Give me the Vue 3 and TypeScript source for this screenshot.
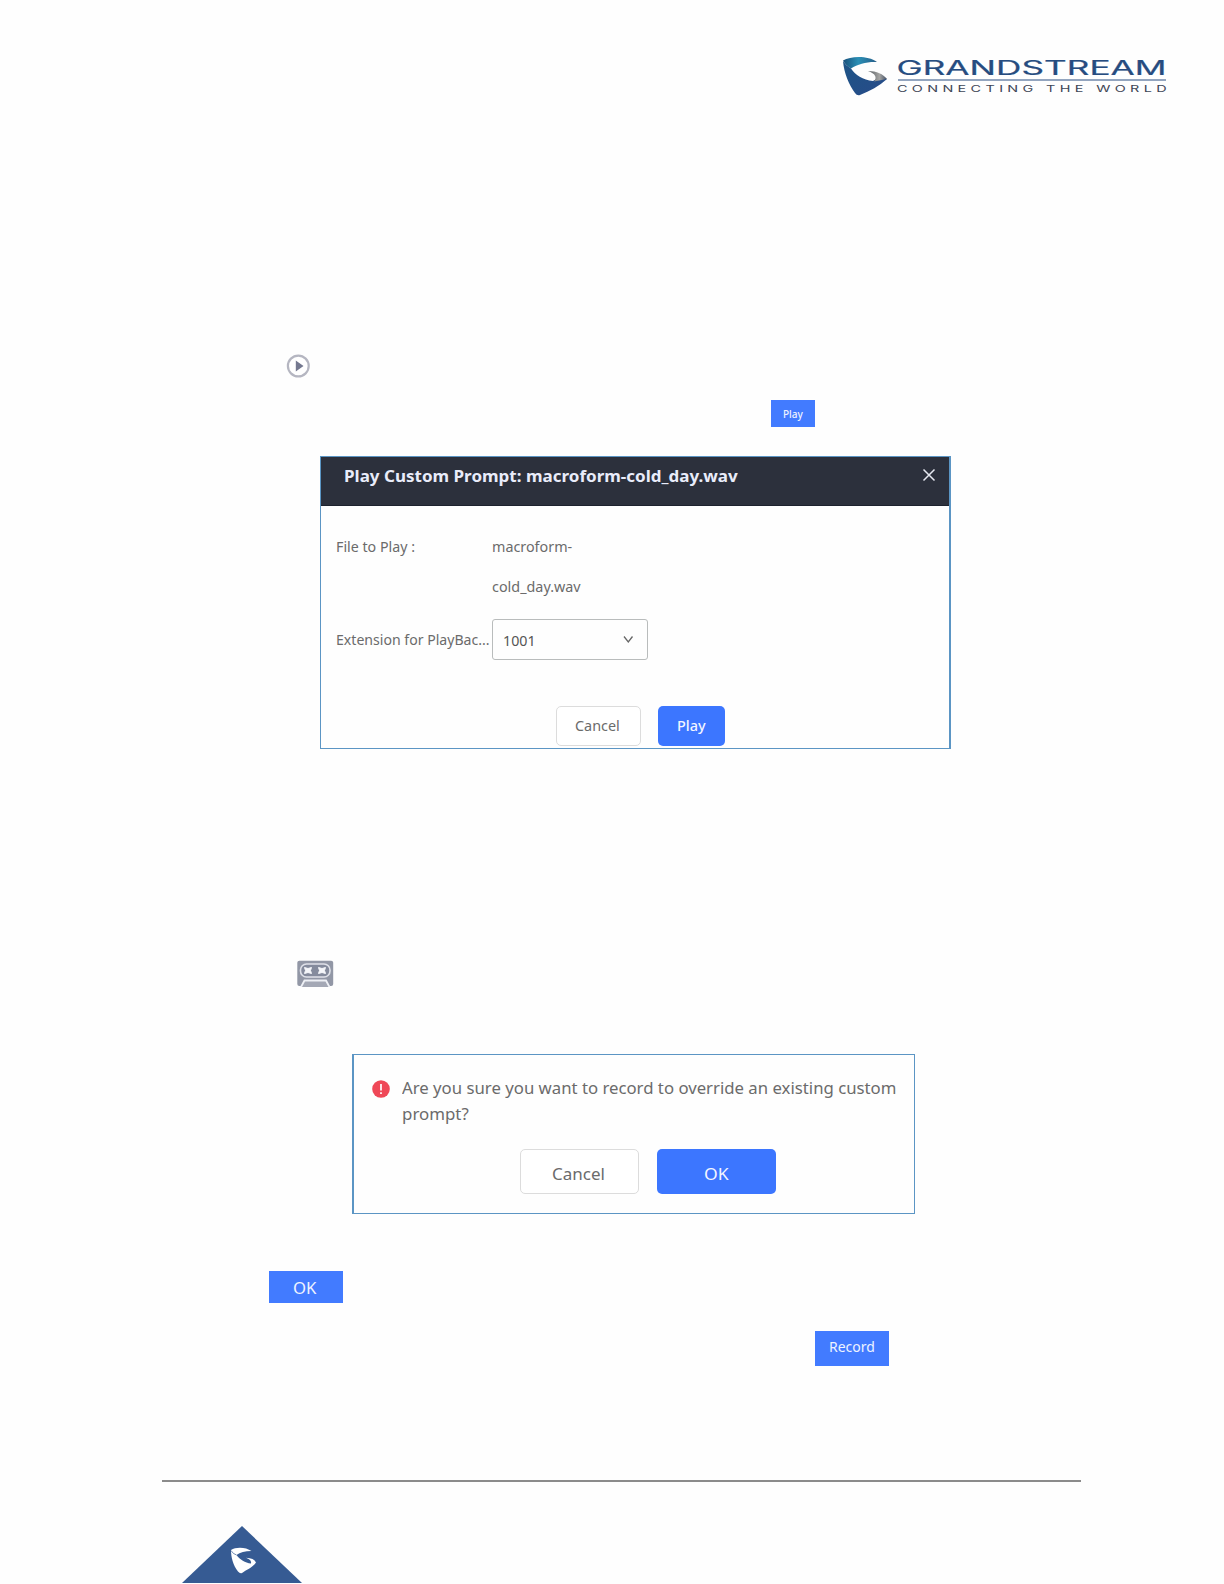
<script setup lang="ts">
import type { Directive } from 'vue'

// Condenses or widens a label horizontally to the given width in pixels.
const vFit: Directive<HTMLElement, number> = {
  mounted(el, binding) {
    el.style.transform = `scaleX(${binding.value / el.offsetWidth})`
  },
}
</script>

<template>
  <main class="page">
    <header class="brand">
      <svg width="330" height="46" viewBox="0 0 330 46">
        <defs>
          <linearGradient id="top" x1="0" y1="0" x2="1" y2="0">
            <stop offset="0" stop-color="#174e79" />
            <stop offset=".45" stop-color="#2b8fb5" />
            <stop offset="1" stop-color="#265d88" />
          </linearGradient>
          <linearGradient id="body" x1="0" y1="0" x2="1" y2="1">
            <stop offset="0" stop-color="#1d5486" />
            <stop offset="1" stop-color="#284b89" />
          </linearGradient>
          <linearGradient id="tip" x1="0" y1="0" x2="1" y2="0">
            <stop offset="0" stop-color="#555b60" />
            <stop offset=".6" stop-color="#a5a5a3" />
            <stop offset="1" stop-color="#445064" />
          </linearGradient>
        </defs>
        <path d="M0 4.500C8 0 25 -.5 34 6C24 5.500 15 8 8 12.500Q3 10 0 4.500Z" fill="url(#top)" />
        <path d="M0 5Q3 10 8 12.500C12 19 20 24 30 25L37 21L44 23C36 30 27 35 17 39Q14 40 12 37C6 29 1 17 0 5Z" fill="url(#body)" />
        <path d="M25 15C34 15 40 18 44 23L31 25.500Q36 19 25 15Z" fill="url(#tip)" />
        <g transform="translate(53.500 19) scale(1.8 1)">
          <text class="name" x="0" y="0" textLength="150" lengthAdjust="spacing">GRANDSTREAM</text>
        </g>
        <rect x="55" y="23.500" width="268" height="1" fill="#294c80" />
        <g transform="translate(54 36.200) scale(1.6 1)">
          <text class="tag" x="0" y="0" textLength="168.500" lengthAdjust="spacing">CONNECTING THE WORLD</text>
        </g>
      </svg>
    </header>

    <svg class="play-icon" width="26" height="26" viewBox="0 0 26 26">
      <circle cx="13.300" cy="13" r="10.400" fill="#fff" stroke="#b5b6c1" stroke-width="2.200" />
      <path d="M10.800 7.500L18.500 13L10.800 18.500Z" fill="#74788f" />
    </svg>

    <div class="chip chip-play"><span v-fit="19.5">Play</span></div>

    <section class="dialog play-dialog">
      <div class="title-bar">
        <strong v-fit="393.5">Play Custom Prompt: macroform-cold_day.wav</strong>
        <svg width="14" height="14" viewBox="0 0 14 14"><path d="M1.500 1.500L12.500 12.500M12.500 1.500L1.500 12.500" /></svg>
      </div>
      <div class="form-row">
        <div class="label"><span v-fit="78.5">File to Play :</span></div>
        <div class="value"><span v-fit="80">macroform-</span><br /><span v-fit="89">cold_day.wav</span></div>
      </div>
      <div class="form-row select-row">
        <div class="label"><span v-fit="153.5">Extension for PlayBac...</span></div>
        <div class="select">
          <span v-fit="33">1001</span>
          <svg width="11" height="9" viewBox="0 0 11 9"><path d="M1 1.500L5.300 7L9.500 1.500" /></svg>
        </div>
      </div>
      <div class="actions">
        <button class="cancel"><span v-fit="45">Cancel</span></button>
        <button class="primary"><span v-fit="28.5">Play</span></button>
      </div>
    </section>

    <svg class="cassette" width="37" height="27" viewBox="0 0 37 27">
      <rect x=".3" y=".7" width="35.900" height="25.300" rx="2" fill="#9297a6" />
      <rect x="3.500" y="4" width="29.500" height="13" rx="6" fill="#858b9d" stroke="#dfe1e9" stroke-width="1.600" />
      <path d="M7.500 7.500L11 8.500L14.500 7.500L13.500 10.500L14.500 13.500L11 12.500L7.500 13.500L8.500 10.500Z M21.500 7.500L25 8.500L28.500 7.500L27.500 10.500L28.500 13.500L25 12.500L21.500 13.500L22.500 10.500Z" fill="#f5f6fa" stroke="#f5f6fa" />
      <path d="M4 27L7.500 20.500H29L32.500 27" fill="#a4a8b5" stroke="#eef0f5" stroke-width="1.800" />
    </svg>

    <section class="dialog confirm-dialog">
      <div class="message">
        <svg width="18" height="18" viewBox="0 0 18 18">
          <circle cx="9" cy="9" r="8.800" fill="#ef4857" />
          <path d="M9 4V10.500M9 12.300V14" stroke="#fff" stroke-width="1.700" />
        </svg>
        <p>
          <span v-fit="494.5">Are you sure you want to record to override an existing custom</span><br />
          <span v-fit="66.5">prompt?</span>
        </p>
      </div>
      <div class="actions">
        <button class="cancel"><span v-fit="52.5">Cancel</span></button>
        <button class="primary"><span v-fit="24.5">OK</span></button>
      </div>
    </section>

    <div class="chip chip-ok"><span v-fit="23">OK</span></div>
    <div class="chip chip-record"><span v-fit="46">Record</span></div>

    <footer>
      <svg width="120" height="57" viewBox="0 0 120 57">
        <path d="M60 0L120 57H0Z" fill="#365b93" />
        <path d="M49 24C54 20.500 64 21 69.500 25C63 25 58 26.500 54.500 29C58 33.500 63 37 69 37.500Q70 34 64 31.700Q72 32 74 36.500C70 42 64 44 60 47Q58 48 56 45.500C51 39 49 31 49 24Z" fill="#fff" />
        <path d="M49 24.500Q51 28 54.500 29" fill="none" stroke="#365b93" stroke-width=".7" />
      </svg>
    </footer>
  </main>
</template>

<style>
body {
  margin: 0;
  background: #fefefe;
}
</style>

<style scoped>
.page {
  width: 1224px;
  height: 1584px;
  display: flex;
  flex-direction: column;
  align-items: flex-start;
  overflow: hidden;
  box-sizing: border-box;
  background: #fefefe;
  font-family: "Noto Sans", "Open Sans", sans-serif;
  color: #6b6b6b;
}
.page > * {
  flex: none;
}
svg {
  display: block;
  flex: none;
}
span,
strong {
  display: inline-block;
  white-space: nowrap;
  transform-origin: left center;
}
.brand {
  height: 46px;
  margin: 56px 0 0 843px;
}
.name {
  font: 400 19.500px Inter, sans-serif;
  fill: #264c80;
  stroke: #264c80;
  stroke-width: 0.2px;
}
.tag {
  font: 400 9px Inter, sans-serif;
  fill: #3f4656;
}
.play-icon {
  margin: 251px 0 0 285px;
}
.chip {
  box-sizing: border-box;
  background: #427bff;
  color: #eef3ff;
}
.chip-play {
  width: 44px;
  height: 27px;
  margin: 21px 0 0 771px;
  padding-left: 12px;
  font-size: 10.800px;
  line-height: 27px;
  font-weight: 500;
}
.dialog {
  box-sizing: border-box;
  border: 1px solid #5b95c4;
  background: #fefefe;
}
.play-dialog {
  width: 631px;
  height: 293px;
  margin: 29px 0 0 320px;
  border-right-width: 2px;
  font-size: 14.700px;
}
.title-bar {
  height: 49px;
  box-sizing: border-box;
  border-bottom: 1px solid #1d222e;
  background: #2c303c;
  display: flex;
  justify-content: space-between;
  padding: 0 13px 0 22.500px;
  color: #e9ecfa;
  font-size: 16.400px;
  line-height: 38px;
}
.title-bar svg {
  margin-top: 11px;
  stroke: #e6e8f0;
  stroke-width: 1.5;
}
.form-row {
  display: flex;
  padding-left: 15px;
  margin-top: 19.500px;
  line-height: 40.500px;
}
.label {
  width: 156px;
}
.select-row {
  margin-top: 12.500px;
}
.select-row .label {
  line-height: 41.500px;
}
.select {
  box-sizing: border-box;
  width: 156px;
  height: 41px;
  display: flex;
  justify-content: space-between;
  align-items: center;
  padding: 0 13.500px 0 10px;
  border: 1.500px solid #b9bcbc;
  border-radius: 3px;
  line-height: 38px;
  color: #555;
}
.select svg {
  fill: none;
  stroke: #666;
  stroke-width: 1.3;
}
.actions {
  display: flex;
}
button {
  box-sizing: border-box;
  margin: 0;
  border: 0;
  font: inherit;
  text-align: left;
  border-radius: 5px;
}
.cancel {
  border: 1.500px solid #dcdcdc;
  background: #fff;
  color: #6b6b6b;
}
.primary {
  background: #3c76ff;
  color: #f2f5ff;
}
.play-dialog .actions {
  margin: 45.500px 0 0 235px;
  gap: 17px;
}
.play-dialog button {
  height: 39.500px;
  line-height: 37px;
  padding: 0 0 1px 19px;
}
.play-dialog .cancel {
  width: 85px;
  padding-left: 18px;
}
.play-dialog .primary {
  width: 67px;
  font-weight: 500;
}
.cassette {
  margin: 211px 0 0 297px;
}
.confirm-dialog {
  width: 563px;
  height: 160px;
  margin: 67px 0 0 352px;
  border-left-width: 2px;
  font-size: 17px;
}
.message {
  display: flex;
  padding: 20px 0 0 18px;
}
.message svg {
  margin-top: 5px;
}
.message p {
  margin: 0 0 0 12px;
  line-height: 26px;
}
.confirm-dialog .actions {
  margin: 22px 0 0 165.500px;
  gap: 18px;
  font-size: 16.500px;
}
.confirm-dialog button {
  width: 119px;
  height: 45px;
  padding: 4px 0 0 47.500px;
  line-height: 41px;
}
.confirm-dialog .cancel {
  padding: 4px 0 0 31.500px;
  line-height: 39px;
}
.chip-ok {
  width: 74px;
  height: 32px;
  margin: 57px 0 0 269px;
  padding-left: 24px;
  font-size: 16px;
  line-height: 34px;
}
.chip-record {
  width: 74px;
  height: 35px;
  margin: 28px 0 0 815px;
  padding-left: 13.500px;
  font-size: 13.700px;
  line-height: 32px;
}
footer {
  box-sizing: border-box;
  width: 919px;
  height: 103px;
  margin: 114px 0 0 162px;
  padding: 44px 0 0 20px;
  border-top: 2px solid #8b8b8b;
}
</style>
